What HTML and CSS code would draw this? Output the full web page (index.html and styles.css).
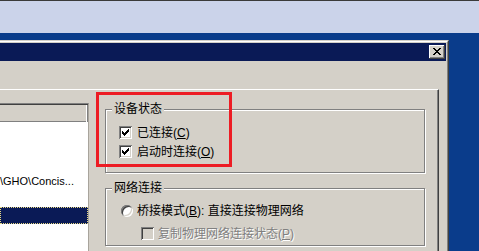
FILE: index.html
```html
<!DOCTYPE html>
<html>
<head>
<meta charset="utf-8">
<title>虚拟机设置</title>
<link rel="stylesheet" href="styles.css">
</head>
<body>
<div class="topbar"></div>
<div class="dialog">
  <div class="frame">
    <div class="titlebar">
      <div class="close-btn">
        <svg width="8" height="7" viewBox="0 0 8 7" shape-rendering="crispEdges">
          <rect x="0" y="0" width="2" height="1"/><rect x="6" y="0" width="2" height="1"/>
          <rect x="1" y="1" width="2" height="1"/><rect x="5" y="1" width="2" height="1"/>
          <rect x="2" y="2" width="4" height="1"/>
          <rect x="3" y="3" width="2" height="1"/>
          <rect x="2" y="4" width="4" height="1"/>
          <rect x="1" y="5" width="2" height="1"/><rect x="5" y="5" width="2" height="1"/>
          <rect x="0" y="6" width="2" height="1"/><rect x="6" y="6" width="2" height="1"/>
        </svg>
      </div>
    </div>
    <div class="content">
      <div class="panel">
        <div class="listbox">
          <div class="list-inner">
            <div class="list-header"></div>
            <div class="list-row"></div>
            <div class="list-row"></div>
            <div class="list-row"></div>
            <div class="list-row"><span class="path">\GHO\Concis...</span></div>
            <div class="list-row"></div>
            <div class="list-row selected"></div>
          </div>
        </div>
        <div class="groups">
          <div class="group g1">
            <span class="group-title">设备状态</span>
            <div class="opt">
              <span class="checkbox">
                <svg width="9" height="9" viewBox="0 0 9 9" shape-rendering="crispEdges">
                  <rect x="1" y="3" width="1" height="3"/><rect x="2" y="4" width="1" height="3"/>
                  <rect x="3" y="5" width="1" height="3"/><rect x="4" y="4" width="1" height="3"/>
                  <rect x="5" y="3" width="1" height="3"/><rect x="6" y="2" width="1" height="3"/>
                  <rect x="7" y="1" width="1" height="3"/>
                </svg>
              </span>
              <span class="label">已连接(<u>C</u>)</span>
            </div>
            <div class="opt">
              <span class="checkbox">
                <svg width="9" height="9" viewBox="0 0 9 9" shape-rendering="crispEdges">
                  <rect x="1" y="3" width="1" height="3"/><rect x="2" y="4" width="1" height="3"/>
                  <rect x="3" y="5" width="1" height="3"/><rect x="4" y="4" width="1" height="3"/>
                  <rect x="5" y="3" width="1" height="3"/><rect x="6" y="2" width="1" height="3"/>
                  <rect x="7" y="1" width="1" height="3"/>
                </svg>
              </span>
              <span class="label">启动时连接(<u>O</u>)</span>
            </div>
          </div>
          <div class="group g2">
            <span class="group-title">网络连接</span>
            <div class="opt radio-row">
              <span class="radio"></span>
              <span class="label">桥接模式(<u>B</u>): 直接连接物理网络</span>
            </div>
            <div class="opt sub-row">
              <span class="checkbox disabled"></span>
              <span class="label disabled-text">复制物理网络连接状态(<u>P</u>)</span>
            </div>
          </div>
        </div>
      </div>
    </div>
  </div>
</div>
<div class="annotation"></div>
</body>
</html>
```
FILE: styles.css
```css
* { box-sizing: border-box; }
html, body { margin: 0; padding: 0; }
body {
  width: 479px;
  height: 251px;
  overflow: hidden;
  position: relative;
  background: #0a3c8b;
  font-family: "Liberation Sans", "Noto Sans CJK SC", sans-serif;
  font-size: 12px;
  color: #000;
}
.topbar {
  height: 33px;
  background: #cbd3ea;
  border-top: 1px solid #3a3a3a;
}
.dialog {
  width: 449px;
  height: 211px;
  margin-top: 7px;
  background: #d4d0c8;
  border-top: 1px solid #d4d0c8;
  border-right: 1px solid #404040;
}
.frame {
  height: 100%;
  display: flex;
  flex-direction: column;
  border-top: 1px solid #ffffff;
  border-right: 1px solid #808080;
  padding: 1px 1px 0 0;
}
.titlebar {
  height: 18px;
  flex: none;
  background: #0a1a56;
  display: flex;
  justify-content: flex-end;
  padding: 2px 1px 0 0;
}
.close-btn {
  width: 16px;
  height: 14px;
  background: #d4d0c8;
  box-shadow: inset -1px -1px #404040, inset 1px 1px #ffffff, inset -2px -2px #808080;
  padding: 3px 0 0 4px;
}
.close-btn svg { display: block; fill: #000; }
.content {
  flex: 1;
  min-height: 0;
  padding: 28px 7px 0 0;
}
.panel {
  height: 100%;
  display: flex;
  align-items: flex-start;
  overflow: hidden;
  border-top: 1px solid #ffffff;
  border-right: 1px solid #404040;
  box-shadow: inset -1px 0 #808080;
}
.listbox {
  width: 89px;
  height: 148px;
  margin-top: 13px;
  border-top: 1px solid #808080;
  border-right: 1px solid #a8a49c;
  background: #ffffff;
}
.list-inner {
  height: 100%;
  border-top: 1px solid #404040;
}
.list-header {
  height: 17px;
  background: #d4d0c8;
  box-shadow: inset -1px 0 #808080, inset -2px 0 #ffffff, inset 0 -1px #808080;
}
.list-row {
  height: 17px;
  white-space: nowrap;
}
.path {
  display: block;
  font-size: 11px;
  line-height: 17px;
}
.list-row.selected {
  background: #0a1a56;
  outline: 1px dotted #e6d884;
  outline-offset: -1px;
}
.groups {
  width: 320px;
  margin-left: 16px;
  margin-top: 19px;
}
.group {
  position: relative;
  border: 1px solid #808080;
  box-shadow: inset 1px 1px #ffffff, 1px 1px #ffffff;
}
.g1 { padding: 13px 0 11px 13px; }
.g2 { margin-top: 15px; padding: 12px 0 2px 15px; }
.group-title {
  position: absolute;
  top: -8px;
  left: 6px;
  padding: 0 2px;
  background: #d4d0c8;
  line-height: 14px;
}
.opt {
  height: 19px;
  display: flex;
  align-items: center;
  gap: 5px;
}
.label { line-height: 14px; white-space: nowrap; }
.checkbox {
  width: 13px;
  height: 13px;
  flex: none;
  padding: 2px;
  background: #ffffff;
  box-shadow: inset 1px 1px #808080, inset -1px -1px #ffffff, inset 2px 2px #404040, inset -2px -2px #d4d0c8;
}
.checkbox svg { display: block; fill: #000; }
.checkbox.disabled { background: #d4d0c8; }
.radio {
  width: 12px;
  height: 12px;
  flex: none;
  border-radius: 50%;
  background: #ffffff;
  box-shadow: inset 1px 1px #808080, inset -1px -1px #ffffff, inset 2px 2px #404040, inset -2px -2px #d4d0c8;
}
.radio-row { gap: 4px; }
.sub-row { margin-top: 4px; padding-left: 20px; gap: 4px; }
.disabled-text { color: #808080; text-shadow: 1px 1px #ffffff; }
.annotation {
  position: absolute;
  left: 96px;
  top: 92px;
  width: 136px;
  height: 75px;
  border: 3px solid #ed1c24;
}
```
